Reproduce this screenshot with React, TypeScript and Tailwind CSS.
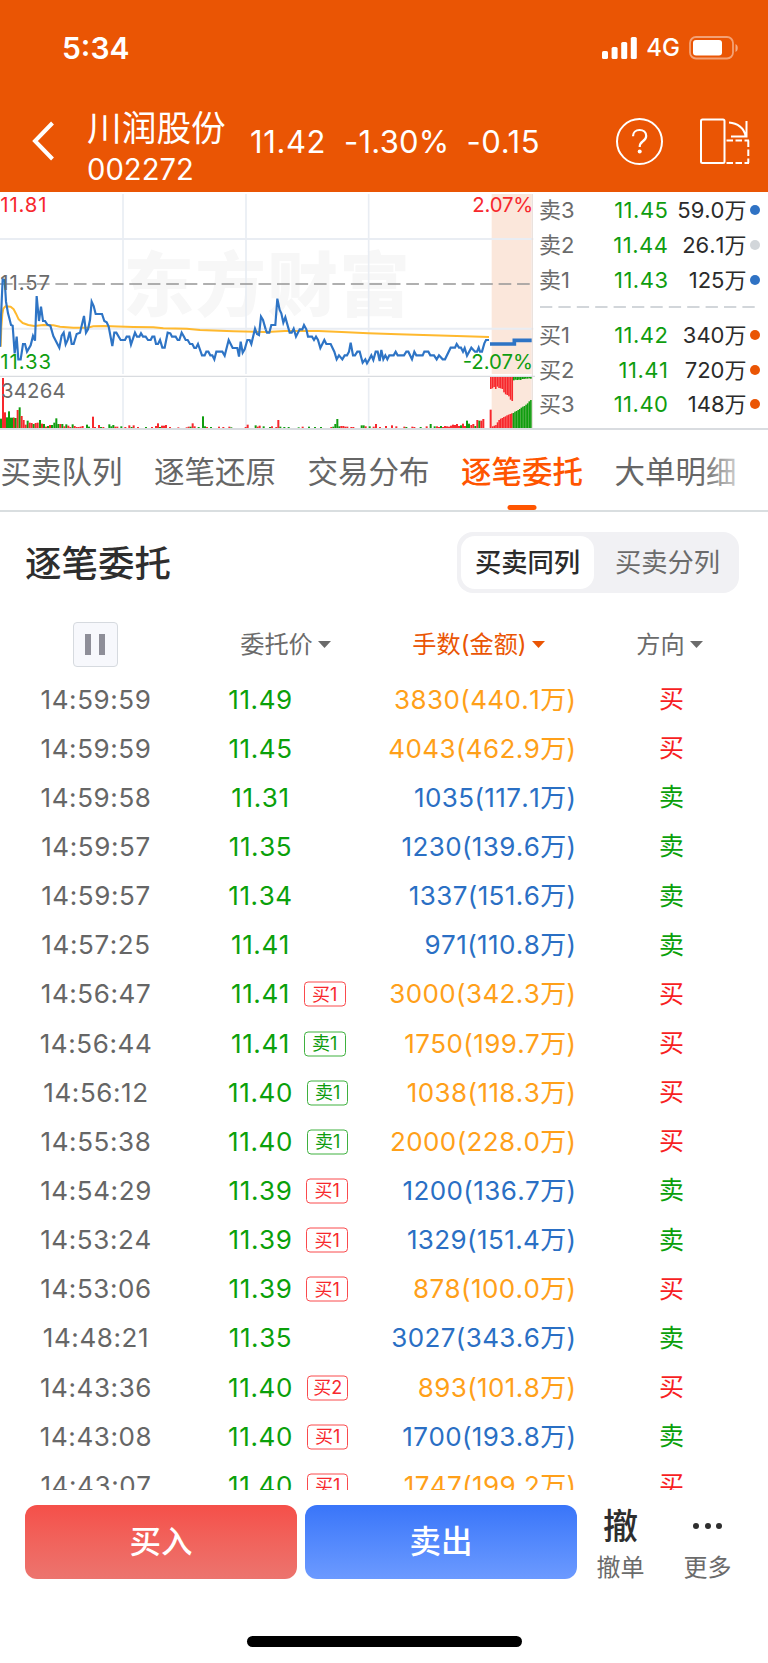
type Side = "buy" | "sell";

interface Order {
  time: string;
  price: string;
  amount: string;
  side: Side;
  tag?: string;
}

const orders: Order[] = [
  { time: "14:59:59", price: "11.49", amount: "3830(440.1万)", side: "buy" },
  { time: "14:59:59", price: "11.45", amount: "4043(462.9万)", side: "buy" },
  { time: "14:59:58", price: "11.31", amount: "1035(117.1万)", side: "sell" },
  { time: "14:59:57", price: "11.35", amount: "1230(139.6万)", side: "sell" },
  { time: "14:59:57", price: "11.34", amount: "1337(151.6万)", side: "sell" },
  { time: "14:57:25", price: "11.41", amount: "971(110.8万)", side: "sell" },
  { time: "14:56:47", price: "11.41", amount: "3000(342.3万)", side: "buy", tag: "买1" },
  { time: "14:56:44", price: "11.41", amount: "1750(199.7万)", side: "buy", tag: "卖1" },
  { time: "14:56:12", price: "11.40", amount: "1038(118.3万)", side: "buy", tag: "卖1" },
  { time: "14:55:38", price: "11.40", amount: "2000(228.0万)", side: "buy", tag: "卖1" },
  { time: "14:54:29", price: "11.39", amount: "1200(136.7万)", side: "sell", tag: "买1" },
  { time: "14:53:24", price: "11.39", amount: "1329(151.4万)", side: "sell", tag: "买1" },
  { time: "14:53:06", price: "11.39", amount: "878(100.0万)", side: "buy", tag: "买1" },
  { time: "14:48:21", price: "11.35", amount: "3027(343.6万)", side: "sell" },
  { time: "14:43:36", price: "11.40", amount: "893(101.8万)", side: "buy", tag: "买2" },
  { time: "14:43:08", price: "11.40", amount: "1700(193.8万)", side: "sell", tag: "买1" },
  { time: "14:43:07", price: "11.40", amount: "1747(199.2万)", side: "buy", tag: "买1" },
];

const asks = [
  { label: "卖3", price: "11.45", amount: "59.0万", dot: "bg-[#2f72c4]" },
  { label: "卖2", price: "11.44", amount: "26.1万", dot: "bg-[#d2d6da]" },
  { label: "卖1", price: "11.43", amount: "125万", dot: "bg-[#2f72c4]" },
];

const bids = [
  { label: "买1", price: "11.42", amount: "340万", dot: "bg-[#ea5504]" },
  { label: "买2", price: "11.41", amount: "720万", dot: "bg-[#ea5504]" },
  { label: "买3", price: "11.40", amount: "148万", dot: "bg-[#ea5504]" },
];

const tabs = ["买卖队列", "逐笔还原", "交易分布", "逐笔委托", "大单明细"];

const morning =
  "0,470 3,380 8,268 14,270 18,335 24,370 28,385 33,405 38,407 44,490 50,440 55,508 62,508 69,462 75,462 81,485 92,466 99,438 105,452 110,318 117,393 123,350 129,393 135,393 142,404 151,407 160,438 178,473 185,437 191,428 197,463 203,450 209,425 215,462 221,462 230,432 240,428 252,378 258,428 264,418 270,390 275,335 281,348 287,372 306,372 313,393 320,397 326,410 337,468 343,428 349,428 362,450 375,450 380,440 388,440 393,464 405,428 411,440 418,440 423,430 429,440 437,440 444,450 452,450 457,440 463,440 468,462 474,462 480,450 487,473 494,473 503,428 511,430 516,440 527,440 533,450 538,450 545,428 552,440 557,450 563,450 570,462 577,462 583,474 588,474 594,462 606,496 614,496 619,485 625,485 631,496 637,496 643,508 649,485 667,485 674,497 686,450 698,474 712,474 717,500 722,455 728,488 734,478 742,450 749,450 754,462 765,416 771,432 777,435 783,380 789,390 797,418";

const afternoon =
  "2,418 6,428 13,428 19,405 31,405 37,326 44,360 49,370 55,398 61,382 74,428 80,428 86,416 93,440 104,418 112,418 117,405 124,418 129,440 141,440 147,450 153,440 159,450 166,474 178,450 184,462 197,462 208,485 215,508 222,496 232,508 239,496 246,496 252,485 257,458 264,496 270,496 277,485 284,485 293,518 301,508 306,520 313,508 319,496 325,510 332,485 338,485 344,513 349,480 355,508 361,496 367,508 373,496 386,496 392,485 398,496 417,496 424,485 430,485 441,508 448,485 454,496 473,496 478,485 490,485 496,496 507,496 515,508 522,496 533,508 540,508 557,473 570,473 575,462 582,473 588,473 594,485 599,474 606,497 619,473 630,485 636,485 641,473 645,485 651,485 658,460 663,450 672,450";

const average =
  "2,470 4,410 7,372 10,356 16,349 32,350 41,358 48,371 56,388 68,399 85,405 103,408 130,405 160,406 180,410 220,413 262,413 280,409 310,408 400,411 460,412 490,415 560,416 600,420 700,424 800,426 855,423 955,423 1025,426 1105,430 1195,433 1295,436 1395,439 1467,441";

const R = "#f7282d";
const G = "#0f9d0f";

// [x, height, colour] of each minute's volume
const volumes: [number, number, string][] = [
  [3, 28, G], [9, 150, R], [15, 47, R], [21, 32, G], [27, 50, G], [33, 31, G],
  [39, 31, G], [42, 31, R], [47, 30, G], [53, 54, R], [59, 62, G], [65, 36, R],
  [71, 24, R], [77, 10, R], [83, 22, G], [89, 16, R], [95, 15, R], [101, 12, G],
  [107, 15, R], [113, 16, R], [120, 24, G], [126, 13, R], [132, 12, G], [138, 4, R],
  [144, 6, G], [150, 9, R], [156, 9, G], [163, 16, G], [169, 29, G], [175, 12, G],
  [181, 12, R], [187, 12, G], [193, 5, R], [199, 11, G], [205, 7, R], [211, 3, R],
  [218, 11, G], [224, 6, R], [230, 3, R], [236, 3, R], [242, 4, R], [248, 6, R],
  [261, 10, G], [267, 4, G], [279, 34, R], [285, 3, R], [297, 9, R], [303, 3, G],
  [310, 3, R], [328, 11, G], [334, 5, G], [340, 9, G], [346, 4, R], [352, 4, R],
  [364, 5, G], [376, 3, R], [388, 8, R], [395, 3, G], [401, 8, R], [414, 3, R],
  [438, 3, G], [456, 3, R], [468, 6, R], [474, 14, R], [480, 3, G], [486, 7, R],
  [492, 7, R], [498, 9, R], [510, 3, R], [535, 2, R], [560, 2, R], [566, 4, R],
  [572, 4, G], [578, 14, R], [584, 5, R], [596, 3, G], [609, 35, G], [615, 5, G],
  [621, 3, R], [633, 3, G], [657, 4, R], [670, 3, R], [688, 4, R], [694, 2, G],
  [737, 3, R], [743, 10, R], [767, 8, G], [773, 4, R], [779, 7, R], [791, 5, G],
  [810, 3, G], [816, 5, R], [829, 3, R], [835, 24, R], [841, 4, G], [853, 3, G],
  [866, 3, G], [896, 2, G], [908, 4, R], [927, 4, G], [945, 3, G], [963, 3, G],
  [994, 3, R], [1000, 4, G], [1006, 12, G], [1012, 27, G], [1018, 5, G], [1024, 6, R],
  [1030, 6, R], [1036, 4, R], [1042, 4, R], [1054, 3, R], [1060, 3, R], [1085, 8, G],
  [1091, 8, G], [1097, 5, R], [1109, 5, G], [1121, 4, R], [1128, 12, R], [1140, 3, R],
  [1158, 6, R], [1176, 8, R], [1189, 5, R], [1213, 4, R], [1219, 3, G], [1237, 4, R],
  [1243, 3, R], [1262, 3, G], [1280, 5, R], [1292, 12, G], [1304, 5, G], [1311, 5, R],
  [1317, 3, R], [1323, 6, G], [1329, 3, R], [1335, 6, R], [1341, 5, R], [1347, 4, R],
  [1353, 7, R], [1359, 10, R], [1365, 9, R], [1371, 12, R], [1377, 6, R], [1383, 8, G],
  [1389, 13, R], [1395, 6, R], [1401, 22, G], [1407, 13, G], [1414, 9, R], [1420, 12, R],
  [1426, 6, G], [1432, 24, R], [1438, 22, G], [1444, 22, R], [1450, 27, R],
];

const matched = [5, 7, 9, 17, 24, 28, 30, 33, 35, 38, 40, 42, 44, 45, 49, 51, 54, 57, 61, 64, 66, 70, 74, 80, 84];
const unmatched = [36, 34, 30, 36, 29, 33, 34, 36, 46, 52, 54, 58, 68, 72];
const unmatchedTail = [10, 8, 9, 8, 9, 6, 6, 5, 5, 4, 5];

function PriceChart() {
  return (
    <svg
      className="block h-[237px] w-[535px] shrink-0 font-['Inter','Noto_Sans_CJK_SC',sans-serif]"
      viewBox="0 6 1605 711"
      fill="none"
    >
      <rect x="1475" y="12" width="120" height="540" fill="#fbe7db" />
      <rect x="1475" y="561" width="120" height="153" fill="#fbe7db" />
      <text x="370" y="364" fontSize="212" fontWeight="900" letterSpacing="4" fill="#f7f7f7" fontFamily="Noto Sans CJK SC">
        东方财富
      </text>
      <path d="M0 147H1600M0 416H1600" stroke="#e9edf3" strokeWidth="6" />
      <path d="M369 12V552M369 564V714M738 12V552M738 564V714M1106 12V552M1106 564V714" stroke="#e9edf3" strokeWidth="5" />
      <path d="M1597 12V714" stroke="#e6dcd8" strokeWidth="3" />
      <path d="M0 559H1605" stroke="#d9dce0" strokeWidth="4" />
      <path d="M0 282H1590" stroke="#969696" strokeWidth="5" strokeDasharray="38 17.4" />

      <polyline points={average} stroke="#ffb92e" strokeWidth="6" strokeLinejoin="round" />
      <polyline points={morning} stroke="#2e74c5" strokeWidth="6.5" />
      <g transform="translate(795 0)">
        <polyline points={afternoon} stroke="#2e74c5" strokeWidth="6.5" />
      </g>
      <path d="M1470 462H1543V451H1595" stroke="#2e74c5" strokeWidth="11" />

      {volumes.map(([x, h, color]) => (
        <rect key={x} x={x - 3} y={714 - h} width="6" height={h} fill={color} />
      ))}
      <rect x="1469" y="659" width="6" height="55" fill={R} />
      {matched.map((h, i) => (
        <rect key={i} x={1476 + i * 4.76} y={714 - h} width="4.7" height={h} fill={i < 13 ? R : G} />
      ))}
      {unmatched.map((h, i) => (
        <rect key={i} x={1470 + i * 4.95} y="561" width="4.8" height={h} fill={R} />
      ))}
      {unmatchedTail.map((h, i) => (
        <rect key={i} x={1539 + i * 5.1} y="561" width="5.1" height={h} fill={G} />
      ))}

      <g fontSize="61">
        <text x="1" y="66" letterSpacing="2.6" fill={R}>11.81</text>
        <text x="1" y="300" letterSpacing="2.8" fill="#6b6b6b">11.57</text>
        <text x="1" y="537" letterSpacing="2.8" fill={G}>11.33</text>
        <text x="3" y="625" letterSpacing="0.6" fill="#6b6b6b">34264</text>
        <text x="1599" y="66" textAnchor="end" letterSpacing="-0.6" fill={R}>2.07%</text>
        <text x="1599" y="537" textAnchor="end" fill={G}>-2.07%</text>
      </g>
    </svg>
  );
}

function BookRow({ label, price, amount, dot }: (typeof asks)[number]) {
  return (
    <div className="flex h-[34.8px] items-center text-[22px] leading-none [font-kerning:none]">
      <span className="w-[48px] text-[#6b6b6b]">{label}</span>
      <span className="w-[81.5px] text-right tracking-[0.5px] text-[#0f9d0f]">{price}</span>
      <span className="w-[78px] text-right text-[#2b2b2b]">{amount}</span>
      <span className={`ml-[3.5px] size-[10px] rounded-full ${dot}`} />
    </div>
  );
}

function Caret() {
  return (
    <svg className="ml-[5px] h-[7px] w-[13px]" viewBox="0 0 13 7" fill="currentColor">
      <path d="M0 0H13L6.5 7Z" />
    </svg>
  );
}

function OrderRow({ order }: { order: Order }) {
  const buy = order.side === "buy";
  const tagColor = order.tag?.startsWith("买")
    ? "border-[#fa4a4d] text-[#f7282d]"
    : "border-[#3fb13f] text-[#0f9d0f]";
  return (
    <div className="flex h-[49.15px] items-center text-[26px] leading-none tracking-[0.6px] [font-kerning:none]">
      <span className="w-[192px] text-center text-[#666666]">{order.time}</span>
      <span className="flex w-[137px] justify-center text-[#0aa00a]">
        <span className="relative">
          {order.price}
          {order.tag && (
            <span
              className={`absolute top-1/2 left-full ml-[14px] flex h-[25px] w-[41.5px] -translate-y-1/2 items-center justify-center rounded-[4px] border-[1.5px] text-[18px] tracking-normal ${tagColor}`}
            >
              {order.tag}
            </span>
          )}
        </span>
      </span>
      <span className={`w-[247.5px] text-right tracking-[0.4px] ${buy ? "text-[#ffa019]" : "text-[#2a6fc4]"}`}>
        {order.amount}
      </span>
      <span className={`w-[190px] text-center text-[25px] tracking-normal ${buy ? "text-[#f71e23]" : "text-[#0aa00a]"}`}>
        {buy ? "买" : "卖"}
      </span>
    </div>
  );
}

export default function App() {
  return (
    <main className="flex h-[1663px] w-[768px] flex-col overflow-hidden bg-white font-['Inter','Noto_Sans_CJK_SC',sans-serif]">
      <header className="h-[192px] shrink-0 bg-[#ea5504] text-white">
        <div className="flex h-[95px] items-center pr-[29px] pl-[62px] leading-none">
          <span className="text-[30px] font-semibold">5:34</span>
          <div className="ml-auto flex items-center">
            <svg className="h-[22px] w-[35px]" viewBox="0 0 35 22" fill="currentColor">
              <rect y="14" width="6" height="8" rx="1.6" />
              <rect x="9.6" y="10" width="6" height="12" rx="1.6" />
              <rect x="19.2" y="5" width="6" height="17" rx="1.6" />
              <rect x="28.8" width="6" height="22" rx="1.6" />
            </svg>
            <span className="ml-[9px] text-[24px] font-medium">4G</span>
            <svg className="ml-[9px] h-[24px] w-[50px]" viewBox="0 0 50 24">
              <rect x="1" y="1" width="43" height="21.5" rx="6" fill="none" stroke="#fff" strokeOpacity=".45" strokeWidth="1.8" />
              <rect x="4" y="4" width="29" height="15.5" rx="3" fill="#fff" />
              <path d="M46.5 8c3 1.2 3 6.8 0 8z" fill="#fff" fillOpacity=".5" />
            </svg>
          </div>
        </div>
        <div className="flex h-[92px] items-center leading-none">
          <svg className="ml-[32px] h-[40px] w-[24px]" viewBox="0 0 24 40" fill="none" stroke="currentColor" strokeWidth="4">
            <path d="M20.5 2L3 20l17.5 18" />
          </svg>
          <div className="ml-[31px] w-[163px] pt-[15px]">
            <p className="text-[34.7px] leading-[42px]">川润股份</p>
            <p className="text-[29.2px] leading-[41px]">002272</p>
          </div>
          <span className="text-[31px] tracking-[0.6px]">11.42</span>
          <span className="ml-[18px] text-[31px] tracking-[0.2px]">-1.30%</span>
          <span className="ml-[17px] text-[31px] tracking-[0.6px]">-0.15</span>
          <div className="mr-[18px] ml-auto flex items-center gap-[36.5px]">
            <span className="flex size-[47px] items-center justify-center rounded-full border-2 border-white">
              <svg className="h-[26px] w-[17px]" viewBox="0 0 17 26" fill="none" stroke="currentColor" strokeWidth="2.200">
                <path d="M2 8.200C2 4.500 4.800 2 8.600 2s6.600 2.500 6.600 6c0 2.700-1.600 4.100-3.600 5.500C9.600 15 8.700 16.200 8.700 19" />
                <circle cx="8.700" cy="23.500" r="2" fill="currentColor" stroke="none" />
              </svg>
            </span>
            <svg className="h-[48px] w-[51px]" viewBox="0 0 51 48" fill="none" stroke="currentColor" strokeWidth="2">
              <rect x="2" y="2.500" width="23.500" height="43.500" rx="1.500" />
              <path d="M30 5.500c8.500.5 15.500 6 16.500 13.500M47.500 4v15.500H32" />
              <path d="M27.500 23.500H50M27.500 46H50M49.300 23.500V46" strokeDasharray="6.500 2.500" />
            </svg>
          </div>
        </div>
      </header>

      <section className="flex h-[237.500px] shrink-0 border-b-2 border-[#d9dce0]">
        <PriceChart />
        <div className="w-[233px] pt-[1px] pl-[4px]">
          {asks.map((row) => (
            <BookRow key={row.label} {...row} />
          ))}
          <svg className="block h-[20px] w-[217px]" viewBox="0 0 217 20">
            <path d="M1 10H217" stroke="#d2d6da" strokeWidth="1.800" strokeDasharray="12.300 6.100" />
          </svg>
          {bids.map((row) => (
            <BookRow key={row.label} {...row} />
          ))}
        </div>
      </section>

      <nav className="relative flex h-[82px] shrink-0 gap-[31.500px] overflow-hidden border-b-2 border-[#d9dee0] pl-[0.500px] text-[30.500px] leading-[84px] whitespace-nowrap text-[#666666]">
        {tabs.map((tab) =>
          tab === "逐笔委托" ? (
            <span key={tab} className="relative font-medium text-[#ff5500]">
              {tab}
              <span className="absolute bottom-0 left-1/2 h-[4.500px] w-[29px] -translate-x-1/2 rounded-full bg-[#ff5500]" />
            </span>
          ) : (
            <span key={tab}>{tab}</span>
          )
        )}
        <span className="absolute top-0 right-0 h-full w-[68px] bg-linear-to-r from-white/0 to-white to-80%" />
      </nav>

      <section className="flex h-[102px] shrink-0 items-center justify-between pr-[29px] pl-[25px] leading-none">
        <h1 className="pt-[3px] text-[36.500px] font-medium text-[#2e2e2e]">逐笔委托</h1>
        <div className="flex h-[61px] w-[282px] rounded-[16px] bg-[#f1f1f4] p-1 text-[26.300px]">
          <span className="flex w-[133px] items-center justify-center rounded-[14px] bg-white pt-[2px] font-medium text-[#2b2b2b]">
            买卖同列
          </span>
          <span className="flex flex-1 items-center justify-center pt-[2px] pl-[6px] text-[#6b6b6b]">买卖分列</span>
        </div>
      </section>

      <div className="flex h-[61.500px] shrink-0 items-center text-[24.200px] leading-none text-[#6b6b6b]">
        <div className="flex w-[190px] justify-center">
          <span className="flex h-[45px] w-[45px] items-center justify-center gap-[7.500px] rounded-[4px] border-[1.500px] border-[#d6dadf] bg-[#f7f8fc]">
            <span className="h-[21px] w-[6.500px] bg-[#8e8e98]" />
            <span className="h-[21px] w-[6.500px] bg-[#8e8e98]" />
          </span>
        </div>
        <span className="flex w-[191px] items-center justify-center pt-[1px]">委托价<Caret /></span>
        <span className="flex w-[195px] items-center justify-center pt-[1px] text-[#ea5504]">手数(金额)<Caret /></span>
        <span className="flex w-[187px] items-center justify-center pt-[1px]">方向<Caret /></span>
      </div>

      <section className="h-[815px] shrink-0 overflow-hidden">
        {orders.map((order, i) => (
          <OrderRow key={i} order={order} />
        ))}
      </section>

      <footer className="flex shrink-0 pt-[14.500px] pl-[25px] leading-none">
        <button className="h-[74px] w-[272px] rounded-[12px] bg-linear-to-b from-[#f54f49] to-[#ec746e] text-[31.500px] font-medium text-white">
          买入
        </button>
        <button className="ml-[8px] h-[74px] w-[272px] rounded-[12px] bg-linear-to-b from-[#3975f9] to-[#6c9aff] text-[31.500px] font-medium text-white">
          卖出
        </button>
        <div className="flex w-[87px] flex-col items-center text-[24px] text-[#6b6b6b]">
          <span className="flex h-[44px] items-center text-[35px] font-medium text-[#2e2e2e]">撤</span>
          <span className="mt-[7px]">撤单</span>
        </div>
        <div className="flex w-[87px] flex-col items-center text-[24px] text-[#6b6b6b]">
          <span className="flex h-[43px] items-center gap-[5.500px]">
            <span className="size-[6px] rounded-full bg-[#2e2e2e]" />
            <span className="size-[6px] rounded-full bg-[#2e2e2e]" />
            <span className="size-[6px] rounded-full bg-[#2e2e2e]" />
          </span>
          <span className="mt-[8px]">更多</span>
        </div>
      </footer>

      <div className="mx-auto mt-auto mb-[16.500px] h-[10.500px] w-[275px] shrink-0 rounded-full bg-black" />
    </main>
  );
}
